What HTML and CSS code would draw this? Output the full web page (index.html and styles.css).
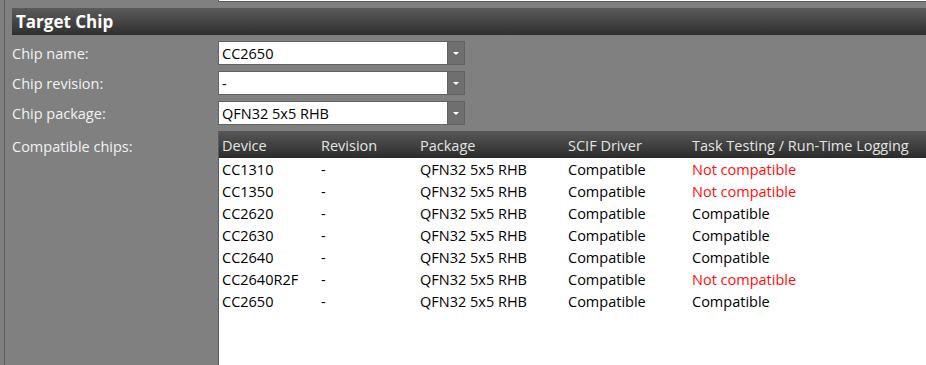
FILE: index.html
```html
<!DOCTYPE html>
<html lang="en">
<head>
  <meta charset="UTF-8"/>
  <title>Target Chip</title>
  <link rel="stylesheet" href="styles.css">
</head>
<body>
  <div class="frame">
    <div class="top-strip"></div>

    <div class="section-title">Target Chip</div>

    <div class="field">
      <label>Chip name:</label>
      <div class="combo"><span class="combo-value">CC2650</span><span class="combo-btn"></span></div>
    </div>
    <div class="field">
      <label>Chip revision:</label>
      <div class="combo"><span class="combo-value">-</span><span class="combo-btn"></span></div>
    </div>
    <div class="field">
      <label>Chip package:</label>
      <div class="combo"><span class="combo-value">QFN32 5x5 RHB</span><span class="combo-btn"></span></div>
    </div>

    <div class="field compat">
      <label>Compatible chips:</label>
      <div class="grid">
        <div class="grid-row grid-head">
          <span>Device</span><span>Revision</span><span>Package</span><span>SCIF Driver</span><span>Task Testing / Run-Time Logging</span>
        </div>
        <div class="grid-row">
          <span>CC1310</span><span>-</span><span>QFN32 5x5 RHB</span><span>Compatible</span><span class="bad">Not compatible</span>
        </div>
        <div class="grid-row">
          <span>CC1350</span><span>-</span><span>QFN32 5x5 RHB</span><span>Compatible</span><span class="bad">Not compatible</span>
        </div>
        <div class="grid-row">
          <span>CC2620</span><span>-</span><span>QFN32 5x5 RHB</span><span>Compatible</span><span>Compatible</span>
        </div>
        <div class="grid-row">
          <span>CC2630</span><span>-</span><span>QFN32 5x5 RHB</span><span>Compatible</span><span>Compatible</span>
        </div>
        <div class="grid-row">
          <span>CC2640</span><span>-</span><span>QFN32 5x5 RHB</span><span>Compatible</span><span>Compatible</span>
        </div>
        <div class="grid-row">
          <span>CC2640R2F</span><span>-</span><span>QFN32 5x5 RHB</span><span>Compatible</span><span class="bad">Not compatible</span>
        </div>
        <div class="grid-row">
          <span>CC2650</span><span>-</span><span>QFN32 5x5 RHB</span><span>Compatible</span><span>Compatible</span>
        </div>
      </div>
    </div>
  </div>
</body>
</html>
```

FILE: styles.css
```css
:root {
  --panel-bg: #808080;
  --edge: #5a5a5a;
  --label: #f2f2f2;
  --bad: #ff0d0d;
}

html, body {
  margin: 0;
  padding: 0;
  height: 100%;
}

body {
  background: var(--panel-bg);
  font-family: 'Open Sans', 'Noto Sans', sans-serif;
  font-size: 14.5px;
  overflow: hidden;
}

.frame {
  margin-left: 4px;
  height: 365px;
  border-left: 1px solid var(--edge);
  padding-left: 7px;
  display: flex;
  flex-direction: column;
  box-sizing: border-box;
}

.top-strip {
  margin-left: 206px;
  height: 1px;
  background: #fff;
  border-bottom: 1px solid var(--edge);
  border-left: 1px solid var(--edge);
}

.section-title {
  margin-top: 6px;
  height: 27px;
  line-height: 28px;
  padding-left: 4px;
  background: linear-gradient(to bottom, #5b5b5b, #2f2f2f);
  color: #fff;
  font-weight: bold;
  font-size: 17px;
}

.field {
  display: flex;
  align-items: center;
  margin-top: 6px;
}

.field label {
  width: 206px;
  color: var(--label);
  padding-top: 1px;
}

.combo {
  width: 247px;
  height: 24px;
  box-sizing: border-box;
  border: 1px solid #626262;
  display: flex;
  background: #fff;
}

.combo-value {
  flex: 1;
  padding-left: 3px;
  line-height: 23px;
  color: #000;
}

.combo-btn {
  width: 16px;
  background: #6f6f6f;
  border-left: 1px solid #626262;
  display: flex;
  align-items: center;
  justify-content: center;
}

.combo-btn::after {
  content: '';
  border-left: 3px solid transparent;
  border-right: 3px solid transparent;
  border-top: 3px solid #fff;
  margin-top: 1px;
}

/* compatible chips list */
.compat {
  flex: 1;
  align-items: stretch;
}

.compat label {
  padding-top: 6px;
}

.grid {
  flex: 1;
  background: #fff;
  border-left: 1px solid var(--edge);
}

.grid-row {
  display: grid;
  grid-template-columns: 99px 99px 148px 124px 1fr;
  height: 22px;
  line-height: 23px;
  color: #000;
}

.grid-row span {
  padding-left: 3px;
  white-space: nowrap;
}

.grid-head {
  height: 27px;
  line-height: 29px;
  background: linear-gradient(to bottom, #585858, #2b2b2b);
  color: #e4e4e4;
}

.bad {
  color: var(--bad);
}
```
